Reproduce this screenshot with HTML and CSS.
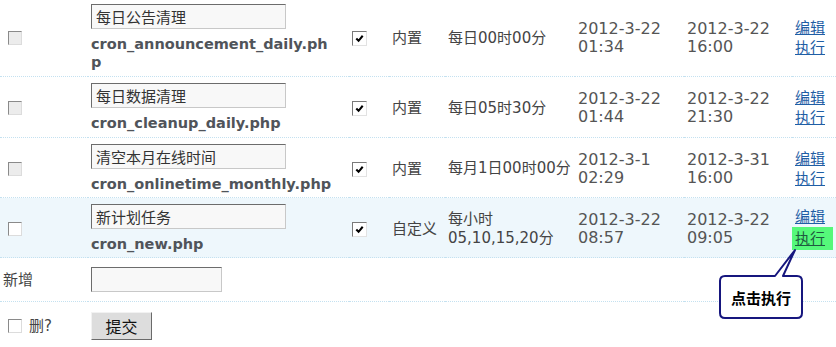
FILE: index.html
```html
<!DOCTYPE html>
<html lang="zh-CN">
<head>
<meta charset="utf-8">
<title>计划任务</title>
<link rel="stylesheet" href="styles.css">
</head>
<body>
<table class="cron">
  <colgroup>
    <col class="c1"><col class="c2"><col class="c3"><col class="c4"><col class="c5"><col class="c6"><col class="c7"><col class="c8">
  </colgroup>
  <tbody>
    <tr>
      <td><span class="cb cb-dis"></span></td>
      <td><input class="name" type="text" value="每日公告清理"><div class="fname">cron_announcement_daily.php</div></td>
      <td><span class="cb cb-on"><svg viewBox="0 0 12 12"><path d="M2.5 6 L5 8.5 L9.5 3" fill="none" stroke="#000" stroke-width="2.2"/></svg></span></td>
      <td>内置</td>
      <td class="sched">每日00时00分</td>
      <td class="date">2012-3-22<br>01:34</td>
      <td class="date">2012-3-22<br>16:00</td>
      <td class="ops"><a href="#">编辑</a><a href="#">执行</a></td>
    </tr>
    <tr>
      <td><span class="cb cb-dis"></span></td>
      <td><input class="name" type="text" value="每日数据清理"><div class="fname">cron_cleanup_daily.php</div></td>
      <td><span class="cb cb-on"><svg viewBox="0 0 12 12"><path d="M2.5 6 L5 8.5 L9.5 3" fill="none" stroke="#000" stroke-width="2.2"/></svg></span></td>
      <td>内置</td>
      <td class="sched">每日05时30分</td>
      <td class="date">2012-3-22<br>01:44</td>
      <td class="date">2012-3-22<br>21:30</td>
      <td class="ops"><a href="#">编辑</a><a href="#">执行</a></td>
    </tr>
    <tr class="tight">
      <td><span class="cb cb-dis"></span></td>
      <td><input class="name" type="text" value="清空本月在线时间"><div class="fname">cron_onlinetime_monthly.php</div></td>
      <td><span class="cb cb-on"><svg viewBox="0 0 12 12"><path d="M2.5 6 L5 8.5 L9.5 3" fill="none" stroke="#000" stroke-width="2.2"/></svg></span></td>
      <td>内置</td>
      <td class="sched">每月1日00时00分</td>
      <td class="date">2012-3-1<br>02:29</td>
      <td class="date">2012-3-31<br>16:00</td>
      <td class="ops"><a href="#">编辑</a><a href="#">执行</a></td>
    </tr>
    <tr class="hl tight">
      <td><span class="cb"></span></td>
      <td><input class="name" type="text" value="新计划任务"><div class="fname">cron_new.php</div></td>
      <td><span class="cb cb-on"><svg viewBox="0 0 12 12"><path d="M2.5 6 L5 8.5 L9.5 3" fill="none" stroke="#000" stroke-width="2.2"/></svg></span></td>
      <td>自定义</td>
      <td class="sched">每小时<br>05,10,15,20分</td>
      <td class="date">2012-3-22<br>08:57</td>
      <td class="date">2012-3-22<br>09:05</td>
      <td class="ops"><a href="#">编辑</a><a href="#" class="mark">执行</a></td>
    </tr>
    <tr class="add">
      <td>新增</td>
      <td><input class="newname" type="text" value=""></td>
      <td colspan="6"></td>
    </tr>
    <tr class="foot">
      <td><span class="cb"></span><span class="del">删?</span></td>
      <td><button class="submit" type="button">提交</button></td>
      <td colspan="6"></td>
    </tr>
  </tbody>
</table>

<div class="callout">
  <svg class="callout-shape" width="90" height="74" viewBox="0 0 90 74">
    <path d="M7 28 H57 L77 2 L65 28 H79 Q84 28 84 33 V65 Q84 70 79 70 H7 Q2 70 2 65 V33 Q2 28 7 28 Z" fill="#fff" stroke="#16167e" stroke-width="2" stroke-linejoin="round"/>
  </svg>
  <div class="callout-text">点击执行</div>
</div>
</body>
</html>
```

FILE: styles.css
```css
html, body {
  margin: 0;
  padding: 0;
  background: #fff;
}
body {
  position: relative;
  width: 836px;
  height: 347px;
  overflow: hidden;
  font-family: "DejaVu Sans", "Noto Sans CJK SC", sans-serif;
  font-size: 15px;
  color: #444;
}
.cron {
  border-collapse: collapse;
  table-layout: fixed;
  width: 836px;
  margin-top: -2px;
}
.c1 { width: 88px; }
.c2 { width: 261px; }
.c3 { width: 40px; }
.c4 { width: 56px; }
.c5 { width: 130px; }
.c6 { width: 109px; }
.c7 { width: 108px; }
.c8 { width: 44px; }

.cron td {
  padding: 6px 0 5px 3px;
  vertical-align: middle;
  border-bottom: 1px dotted #c4e1f0;
  line-height: 18px;
  white-space: nowrap;
}
.cron tr.tight td {
  padding-bottom: 4px;
}
.cron tr.hl td {
  background: #eef7fc;
}
.cron tr.add td {
  padding: 9px 0 9px 3px;
  line-height: 16px;
}
.cron tr.foot td {
  border-bottom: none;
  padding: 10px 0 5px 3px;
  line-height: 16px;
}

.name, .newname {
  display: block;
  box-sizing: border-box;
  height: 25px;
  margin: 0;
  padding: 0 4px;
  border: 1px solid;
  border-color: #6c6c6c #c8c8c8 #c8c8c8 #6c6c6c;
  background: #f8f8f8;
  font-family: "DejaVu Sans", "Noto Sans CJK SC", sans-serif;
  font-size: 15px;
  color: #333;
}
.name { width: 195px; }
.newname { width: 131px; }

.fname {
  width: 245px;
  margin-top: 6px;
  font-weight: bold;
  font-size: 14.5px;
  line-height: 18px;
  color: #50545a;
  white-space: normal;
  word-break: break-all;
}

.cb {
  display: inline-block;
  box-sizing: border-box;
  width: 14px;
  height: 14px;
  margin-left: 5px;
  vertical-align: middle;
  border: 1px solid;
  border-color: #8a8a8a #dcdcdc #dcdcdc #8a8a8a;
  background: #fff;
}
.cb-dis {
  background: #ececec;
}
.cb-on {
  width: 15px;
  height: 15px;
  margin-left: 0;
  border-color: #7a7a7a #e2e2e2 #e2e2e2 #7a7a7a;
}
.cb-on svg {
  display: block;
  width: 11px;
  height: 11px;
  margin: 1px;
}
.del {
  margin-left: 7px;
  vertical-align: middle;
}

.sched {
  line-height: 20px;
}
.tight .sched {
  line-height: 19px;
}
.date {
  font-size: 16px;
  line-height: 18px;
  color: #555;
}
.ops a {
  display: block;
  width: max-content;
  line-height: 20px;
  color: #1f5ea5;
  text-decoration: underline;
}
.ops a.mark {
  margin-left: -3px;
  padding: 2px 8px 1px 3px;
  background: #55f87a;
  color: #1f5a40;
}

.submit {
  display: block;
  box-sizing: border-box;
  width: 61px;
  height: 28px;
  margin: 0;
  padding: 0;
  border: 1px solid;
  border-color: #f2f2f2 #6a6a6a #6a6a6a #f2f2f2;
  background: #dddddd;
  font-family: "DejaVu Sans", "Noto Sans CJK SC", sans-serif;
  font-size: 16px;
  color: #111;
}

.callout {
  position: absolute;
  left: 718px;
  top: 248px;
  width: 90px;
  height: 74px;
}
.callout-shape {
  display: block;
}
.callout-text {
  position: absolute;
  left: 2px;
  top: 28px;
  width: 82px;
  height: 42px;
  display: flex;
  align-items: center;
  justify-content: center;
  font-weight: bold;
  font-size: 15px;
  color: #000;
}
```
